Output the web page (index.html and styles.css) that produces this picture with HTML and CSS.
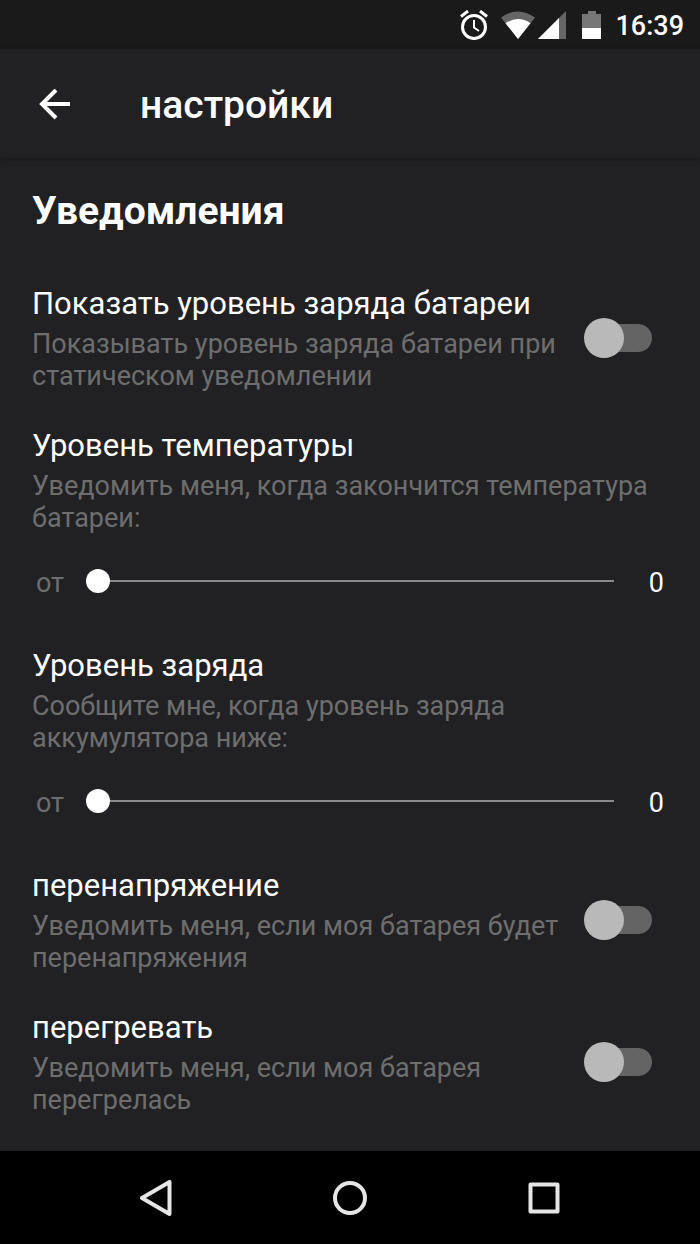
FILE: index.html
```html
<!DOCTYPE html>
<html lang="ru">
<head>
    <meta charset="UTF-8">
    <meta name="viewport" content="width=device-width, initial-scale=1.0">
    <title>настройки</title>
    <link rel="stylesheet" href="styles.css">
</head>
<body>
    <div class="status-bar">
        <svg class="icon-alarm" width="28" height="30" viewBox="0 0 28 30" fill="none" stroke="#fff">
            <circle cx="14" cy="17" r="11.500" stroke-width="3"/>
            <path d="M14 10v7.500l5 3.500" stroke-width="2"/>
            <path d="M1 6.500l7-5.500M27 6.500l-7-5.500" stroke-width="3"/>
        </svg>
        <svg class="icon-wifi" width="34" height="28" viewBox="0 0 34 28">
            <path d="M0 6.500Q17 -5.500 34 6.500L17 28z" fill="#666"/>
            <path d="M4.500 12.200Q17 4 29.500 12.200L17 28z" fill="#fff"/>
        </svg>
        <svg class="icon-signal" width="28" height="28" viewBox="0 0 28 28">
            <path d="M0 28L28 0v28z" fill="#666"/>
            <path d="M0 28L21 7v21z" fill="#fff"/>
        </svg>
        <svg class="icon-battery" width="20" height="28" viewBox="0 0 20 28">
            <path d="M6 0h8v3h5v25H0V3h6z" fill="#777"/>
            <path d="M0 17h19v11H0z" fill="#fff"/>
        </svg>
        <span class="clock">16:39</span>
    </div>

    <header class="toolbar">
        <button class="btn-back" type="button" aria-label="Назад">
            <svg width="32" height="32" viewBox="0 0 32 32" fill="none" stroke="#fff" stroke-width="4">
                <path d="M31 15H4M17 1L3 15l14 14"/>
            </svg>
        </button>
        <h1>настройки</h1>
    </header>

    <main class="settings">
        <h2>Уведомления</h2>

        <div class="item item-switch">
            <label class="text" for="showLevel">
                <span class="title">Показать уровень заряда батареи</span>
                <span class="desc">Показывать уровень заряда батареи при статическом уведомлении</span>
            </label>
            <input type="checkbox" id="showLevel" class="switch">
        </div>

        <div class="item">
            <label class="text" for="temp">
                <span class="title">Уровень температуры</span>
                <span class="desc">Уведомить меня, когда закончится температура батареи:</span>
            </label>
            <div class="slider-row">
                <span class="from">от</span>
                <input type="range" id="temp" class="slider" min="0" max="100" value="0">
                <output class="value" for="temp">0</output>
            </div>
        </div>

        <div class="item">
            <label class="text" for="charge">
                <span class="title">Уровень заряда</span>
                <span class="desc">Сообщите мне, когда уровень заряда аккумулятора ниже:</span>
            </label>
            <div class="slider-row">
                <span class="from">от</span>
                <input type="range" id="charge" class="slider" min="0" max="100" value="0">
                <output class="value" for="charge">0</output>
            </div>
        </div>

        <div class="item item-switch">
            <label class="text" for="overVoltage">
                <span class="title">перенапряжение</span>
                <span class="desc">Уведомить меня, если моя батарея будет перенапряжения</span>
            </label>
            <input type="checkbox" id="overVoltage" class="switch">
        </div>

        <div class="item item-switch">
            <label class="text" for="overHeat">
                <span class="title">перегревать</span>
                <span class="desc">Уведомить меня, если моя батарея перегрелась</span>
            </label>
            <input type="checkbox" id="overHeat" class="switch">
        </div>
    </main>

    <nav class="nav-bar">
        <button type="button" aria-label="Назад">
            <svg width="36" height="36" viewBox="0 0 36 36" fill="none" stroke="#e6e6e6" stroke-width="4" stroke-linejoin="round">
                <path d="M31.500 2v32L4 18z"/>
            </svg>
        </button>
        <button type="button" aria-label="Домой">
            <svg width="36" height="36" viewBox="0 0 36 36" fill="none" stroke="#e6e6e6" stroke-width="4">
                <circle cx="18" cy="18" r="15"/>
            </svg>
        </button>
        <button type="button" aria-label="Недавние">
            <svg width="36" height="36" viewBox="0 0 36 36" fill="none" stroke="#e6e6e6" stroke-width="4" stroke-linejoin="round">
                <path d="M4.500 4.500h27v27h-27z"/>
            </svg>
        </button>
    </nav>

    <script>
        document.querySelectorAll('.slider').forEach(e => {
            e.addEventListener('input', ev => {
                e.nextElementSibling.value = e.value;
            });
        });
    </script>
</body>
</html>
```
FILE: styles.css
```css
*{
    box-sizing: border-box;
}

body{
    display: flex;
    flex-direction: column;
    min-height: 100vh;
    margin: 0;
    background-color: #212123;
    color: #fff;
    font-family: Roboto, "Noto Sans", sans-serif;
}

button{
    display: flex;
    padding: 0;
    border: 0;
    background: none;
    cursor: pointer;
}

h1, h2{
    margin: 0;
}

.status-bar{
    display: flex;
    justify-content: flex-end;
    align-items: center;
    height: 49px;
    padding-right: 16px;
    background-color: #1a1a1a;
}

.icon-wifi{
    margin-left: 13px;
}

.icon-signal{
    margin-left: 3px;
}

.icon-battery{
    margin-left: 16px;
}

.clock{
    margin-left: 13px;
    padding-top: 2px;
    font-size: 27px;
    font-weight: 500;
    line-height: 32px;
}

.toolbar{
    display: flex;
    align-items: center;
    gap: 69px;
    height: 109px;
    padding: 2px 39px 0;
    box-shadow: 0 2px 4px #1a1a1b;
}

.toolbar h1{
    font-size: 39px;
    font-weight: 500;
    line-height: 48px;
}

.settings{
    flex: 1;
    padding: 29px 32px 34px;
}

.settings h2{
    margin-bottom: 49px;
    font-size: 39px;
    font-weight: 700;
    line-height: 48px;
}

.item{
    margin-bottom: 34px;
}

.item:last-child{
    margin-bottom: 0;
}

.item-switch{
    display: flex;
    align-items: center;
    gap: 16px;
    padding-right: 16px;
}

.text{
    display: block;
    flex: 1;
}

.title, .desc{
    display: block;
}

.title{
    margin-bottom: 4px;
    font-size: 31px;
    line-height: 40px;
}

.desc{
    color: #6e6e6e;
    font-size: 27px;
    line-height: 32px;
}

.switch{
    appearance: none;
    display: flex;
    align-items: center;
    flex: none;
    width: 68px;
    height: 40px;
    margin: 0;
    cursor: pointer;
}

/* track */
.switch::before{
    content: '';
    flex: none;
    width: 56px;
    height: 28px;
    margin-left: 12px;
    border-radius: 14px;
    background-color: #646464;
}

/* thumb */
.switch::after{
    content: '';
    flex: none;
    width: 40px;
    height: 40px;
    margin-left: -68px;
    border-radius: 50%;
    background-color: #b9b9b9;
}

.switch:checked::after{
    margin-left: -40px;
    background-color: #fff;
}

.slider-row{
    display: flex;
    align-items: center;
    height: 62px;
    margin-top: 16px;
    padding: 0 4px;
    font-size: 27px;
    line-height: 32px;
}

.from, .value{
    padding-top: 4px;
}

.from{
    width: 50px;
    color: #6e6e6e;
}

.slider{
    appearance: none;
    flex: 1;
    min-width: 0;
    height: 24px;
    margin: 0;
    background: linear-gradient(#8a8a8a, #8a8a8a) center / calc(100% - 24px) 2px no-repeat;
    cursor: pointer;
}

.slider::-webkit-slider-thumb{
    appearance: none;
    width: 24px;
    height: 24px;
    border-radius: 50%;
    background-color: #fff;
}

.value{
    width: 38px;
    text-align: right;
}

.nav-bar{
    display: flex;
    justify-content: center;
    align-items: center;
    gap: 158px;
    height: 93px;
    background-color: #000;
}
```
